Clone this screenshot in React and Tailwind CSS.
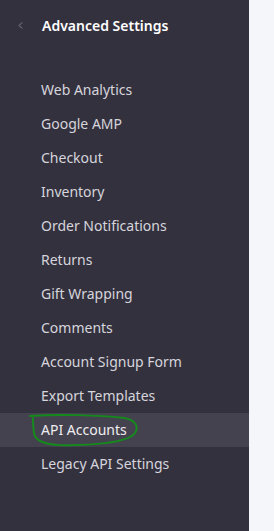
import { ChevronLeft } from "lucide-react"

const items = [
  "Web Analytics",
  "Google AMP",
  "Checkout",
  "Inventory",
  "Order Notifications",
  "Returns",
  "Gift Wrapping",
  "Comments",
  "Account Signup Form",
  "Export Templates",
  "API Accounts",
  "Legacy API Settings",
]

export default function App() {
  return (
    <div className="flex h-[531px] w-[274px] bg-[#f5f6f9]" style={{ fontFamily: '"Noto Sans", "Open Sans", sans-serif' }}>
      <div className="w-[249px] bg-[#34313f] flex flex-col">
        {/* Header */}
        <div className="flex items-center h-[52px] pl-[15px] pb-[1px]">
          <ChevronLeft size={11} className="text-[#8d8b96]" strokeWidth={2} />
          <span className="ml-[16px] text-[14px] font-semibold text-white">Advanced Settings</span>
        </div>

        {/* Menu */}
        <div className="mt-[21px] flex flex-col">
          {items.map((item) => (
            <div
              key={item}
              className={`relative h-[34px] flex items-center pl-[41px] pb-[1px] text-[14px] text-[#d6d5db] ${
                item === "API Accounts" ? "bg-[#45424f] text-[#eeeef0]" : ""
              }`}
            >
              {item}
              {item === "API Accounts" && (
                <svg className="absolute left-[28px] top-[0px]" width="112" height="34" viewBox="0 0 112 34" fill="none">
                  <path
                    d="M2 3 C 30 1, 70 2, 96 5 C 108 7, 111 14, 107 20 C 100 30, 60 33, 30 32 C 14 31, 7 27, 6 20 C 5 14, 5 9, 5 5"
                    stroke="#158a1c"
                    strokeWidth="2"
                    strokeLinecap="round"
                  />
                </svg>
              )}
            </div>
          ))}
        </div>
      </div>
    </div>
  )
}
